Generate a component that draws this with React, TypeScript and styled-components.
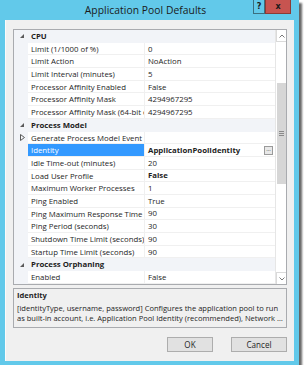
import styled, { createGlobalStyle } from "styled-components";

const GlobalStyle = createGlobalStyle`
  html, body {
    margin: 0;
    padding: 0;
    background: #ffffff;
  }
  body {
    font-family: "Open Sans", "Noto Sans", sans-serif;
    color: #1e1e1e;
  }
`;

const Window = styled.div`
  width: 299px;
  height: 365px;
  background: #62c9ea;
  display: flex;
  flex-direction: column;
  box-shadow: 3px 3px 2px rgba(0, 0, 0, 0.6);
  box-sizing: border-box;
`;

const TitleBar = styled.div`
  height: 20px;
  display: grid;
  grid-template-columns: 1fr auto 1fr;
  align-items: start;
  padding-right: 8px;
`;

const Title = styled.div`
  grid-column: 2;
  font-size: 10.3px;
  line-height: 20px;
  color: #1a1a1a;
  letter-spacing: 0.05px;
`;

const CaptionButtons = styled.div`
  grid-column: 3;
  justify-self: end;
  display: flex;
`;

const CaptionButton = styled.div<{ $close?: boolean }>`
  width: ${p => (p.$close ? "26px" : "12px")};
  height: 14px;
  box-sizing: border-box;
  border: 1px solid ${p => (p.$close ? "#8c3b35" : "#3b6f80")};
  border-top: none;
  background: ${p => (p.$close ? "#c75450" : "#62c9ea")};
  display: flex;
  align-items: center;
  justify-content: center;
  font-family: "DejaVu Sans", sans-serif;
  font-weight: bold;
  font-size: 8px;
  color: #1a1a1a;
`;

const Body = styled.div`
  flex: 1;
  margin: 0 5px 4px 5px;
  background: #f0f0f0;
  border-left: 1px solid #fbfbfb;
  padding: 9px 7px 9px 7px;
  display: flex;
  flex-direction: column;
`;

const Grid = styled.div`
  height: 256px;
  box-sizing: border-box;
  border: 1px solid #a9abaf;
  background: #ffffff;
  display: flex;
`;

const RowList = styled.div`
  flex: 1;
  display: flex;
  flex-direction: column;
  overflow: hidden;
`;

const Row = styled.div<{ $category?: boolean }>`
  height: 12.7px;
  flex: none;
  display: grid;
  grid-template-columns: 14px 116px 1fr;
  font-size: 7.8px;
  line-height: 12px;
  background: ${p => (p.$category ? "#f2f4f8" : "#ffffff")};
  font-weight: ${p => (p.$category ? "bold" : "normal")};
`;

const Gutter = styled.div`
  background: #f2f4f8;
  display: flex;
  align-items: center;
  justify-content: center;
  padding-left: 2px;
`;

const NameCell = styled.div<{ $selected?: boolean; $span?: boolean }>`
  grid-column: ${p => (p.$span ? "2 / 4" : "auto")};
  padding-left: 3px;
  white-space: nowrap;
  overflow: hidden;
  box-sizing: border-box;
  border-bottom: ${p => (p.$span ? "none" : "1px solid #f0f0f0")};
  background: ${p => (p.$selected ? "#3399ff" : "transparent")};
  color: ${p => (p.$selected ? "#ffffff" : "inherit")};
`;

const ValueCell = styled.div<{ $bold?: boolean }>`
  padding-left: 3px;
  white-space: nowrap;
  overflow: hidden;
  box-sizing: border-box;
  border-left: 1px solid #f0f0f0;
  border-bottom: 1px solid #f0f0f0;
  font-weight: ${p => (p.$bold ? "bold" : "normal")};
  display: flex;
  justify-content: space-between;
  align-items: center;
`;

const EllipsisButton = styled.div`
  width: 9px;
  height: 9px;
  margin-right: 2px;
  box-sizing: border-box;
  border: 1px solid #9a9a9a;
  background: #e8e8e8;
  font-size: 6px;
  line-height: 4px;
  text-align: center;
  color: #333;
  font-weight: normal;
`;

const ScrollBar = styled.div`
  width: 10px;
  border-left: 1px solid #e6e6e6;
  display: flex;
  flex-direction: column;
  background: #ffffff;
`;

const ArrowBox = styled.div<{ $bottom?: boolean }>`
  height: 12px;
  box-sizing: border-box;
  border: 1px solid #dadada;
  ${p => (p.$bottom ? "border-bottom: none;" : "border-top: none;")}
  border-right: none;
  display: flex;
  align-items: center;
  justify-content: center;
`;

const Track = styled.div`
  flex: 1;
  padding-top: 41px;
`;

const Thumb = styled.div`
  height: 101px;
  margin-left: 1px;
  background: #d6d6d6;
  display: flex;
  align-items: center;
  justify-content: center;
`;

const Description = styled.div`
  margin-top: 3px;
  height: 40px;
  box-sizing: border-box;
  border: 1px solid #a9abaf;
  padding: 1px 3px;
  font-size: 7.55px;
  line-height: 10.5px;
  overflow: hidden;
`;

const DescTitle = styled.div`
  font-weight: bold;
  margin-bottom: 2px;
`;

const DescText = styled.div`
  white-space: nowrap;
  overflow: hidden;
  text-overflow: ellipsis;
`;

const ButtonRow = styled.div`
  margin-top: 9px;
  display: flex;
  justify-content: flex-end;
  gap: 18px;
`;

const DialogButton = styled.div<{ $w: number }>`
  width: ${p => p.$w}px;
  height: 15px;
  box-sizing: border-box;
  border: 1px solid #adadad;
  background: #e1e1e1;
  font-size: 8.1px;
  display: flex;
  align-items: center;
  justify-content: center;
`;

function Expanded() {
  return (
    <svg width="4" height="4" viewBox="0 0 4 4">
      <polygon points="4,0 4,4 0,4" fill="#5a5a5a" />
    </svg>
  );
}

function Collapsed() {
  return (
    <svg width="5" height="7" viewBox="0 0 5 7">
      <polygon points="0.5,0.5 4.5,3.5 0.5,6.5" fill="none" stroke="#5a5a5a" strokeWidth="1" />
    </svg>
  );
}

function Chevron({ down }: { down?: boolean }) {
  return (
    <svg width="6" height="4" viewBox="0 0 6 4">
      <polyline
        points={down ? "0.5,0.5 3,3 5.5,0.5" : "0.5,3.5 3,1 5.5,3.5"}
        fill="none"
        stroke="#7a7a7a"
        strokeWidth="1"
      />
    </svg>
  );
}

type Item =
  | { kind: "cat"; name: string }
  | { kind: "prop"; name: string; value: string; bold?: boolean; selected?: boolean; expander?: boolean; more?: boolean };

const items: Item[] = [
  { kind: "cat", name: "CPU" },
  { kind: "prop", name: "Limit (1/1000 of %)", value: "0" },
  { kind: "prop", name: "Limit Action", value: "NoAction" },
  { kind: "prop", name: "Limit Interval (minutes)", value: "5" },
  { kind: "prop", name: "Processor Affinity Enabled", value: "False" },
  { kind: "prop", name: "Processor Affinity Mask", value: "4294967295" },
  { kind: "prop", name: "Processor Affinity Mask (64-bit option)", value: "4294967295" },
  { kind: "cat", name: "Process Model" },
  { kind: "prop", name: "Generate Process Model Event Log Entry", value: "", expander: true },
  { kind: "prop", name: "Identity", value: "ApplicationPoolIdentity", bold: true, selected: true, more: true },
  { kind: "prop", name: "Idle Time-out (minutes)", value: "20" },
  { kind: "prop", name: "Load User Profile", value: "False", bold: true },
  { kind: "prop", name: "Maximum Worker Processes", value: "1" },
  { kind: "prop", name: "Ping Enabled", value: "True" },
  { kind: "prop", name: "Ping Maximum Response Time (seconds)", value: "90" },
  { kind: "prop", name: "Ping Period (seconds)", value: "30" },
  { kind: "prop", name: "Shutdown Time Limit (seconds)", value: "90" },
  { kind: "prop", name: "Startup Time Limit (seconds)", value: "90" },
  { kind: "cat", name: "Process Orphaning" },
  { kind: "prop", name: "Enabled", value: "False" },
];

export default function App() {
  return (
    <>
      <GlobalStyle />
      <Window>
        <TitleBar>
          <Title>Application Pool Defaults</Title>
          <CaptionButtons>
            <CaptionButton>?</CaptionButton>
            <CaptionButton $close>x</CaptionButton>
          </CaptionButtons>
        </TitleBar>
        <Body>
          <Grid>
            <RowList>
              {items.map((it, i) =>
                it.kind === "cat" ? (
                  <Row key={i} $category>
                    <Gutter>
                      <Expanded />
                    </Gutter>
                    <NameCell $span>{it.name}</NameCell>
                  </Row>
                ) : (
                  <Row key={i}>
                    <Gutter>{it.expander ? <Collapsed /> : null}</Gutter>
                    <NameCell $selected={it.selected}>{it.name}</NameCell>
                    <ValueCell $bold={it.bold}>
                      <span>{it.value}</span>
                      {it.more ? <EllipsisButton>...</EllipsisButton> : null}
                    </ValueCell>
                  </Row>
                )
              )}
            </RowList>
            <ScrollBar>
              <ArrowBox>
                <Chevron />
              </ArrowBox>
              <Track>
                <Thumb>
                  <svg width="5" height="5" viewBox="0 0 5 5">
                    <path d="M0 0.5H5M0 2.5H5M0 4.5H5" stroke="#8a8a8a" strokeWidth="1" />
                  </svg>
                </Thumb>
              </Track>
              <ArrowBox $bottom>
                <Chevron down />
              </ArrowBox>
            </ScrollBar>
          </Grid>
          <Description>
            <DescTitle>Identity</DescTitle>
            <DescText>
              [identityType, username, password] Configures the application pool to run
            </DescText>
            <DescText>
              as built-in account, i.e. Application Pool Identity (recommended), Network Service, Local System, Local Service, or as a specific user identity.
            </DescText>
          </Description>
          <ButtonRow>
            <DialogButton $w={46}>OK</DialogButton>
            <DialogButton $w={56}>Cancel</DialogButton>
          </ButtonRow>
        </Body>
      </Window>
    </>
  );
}
